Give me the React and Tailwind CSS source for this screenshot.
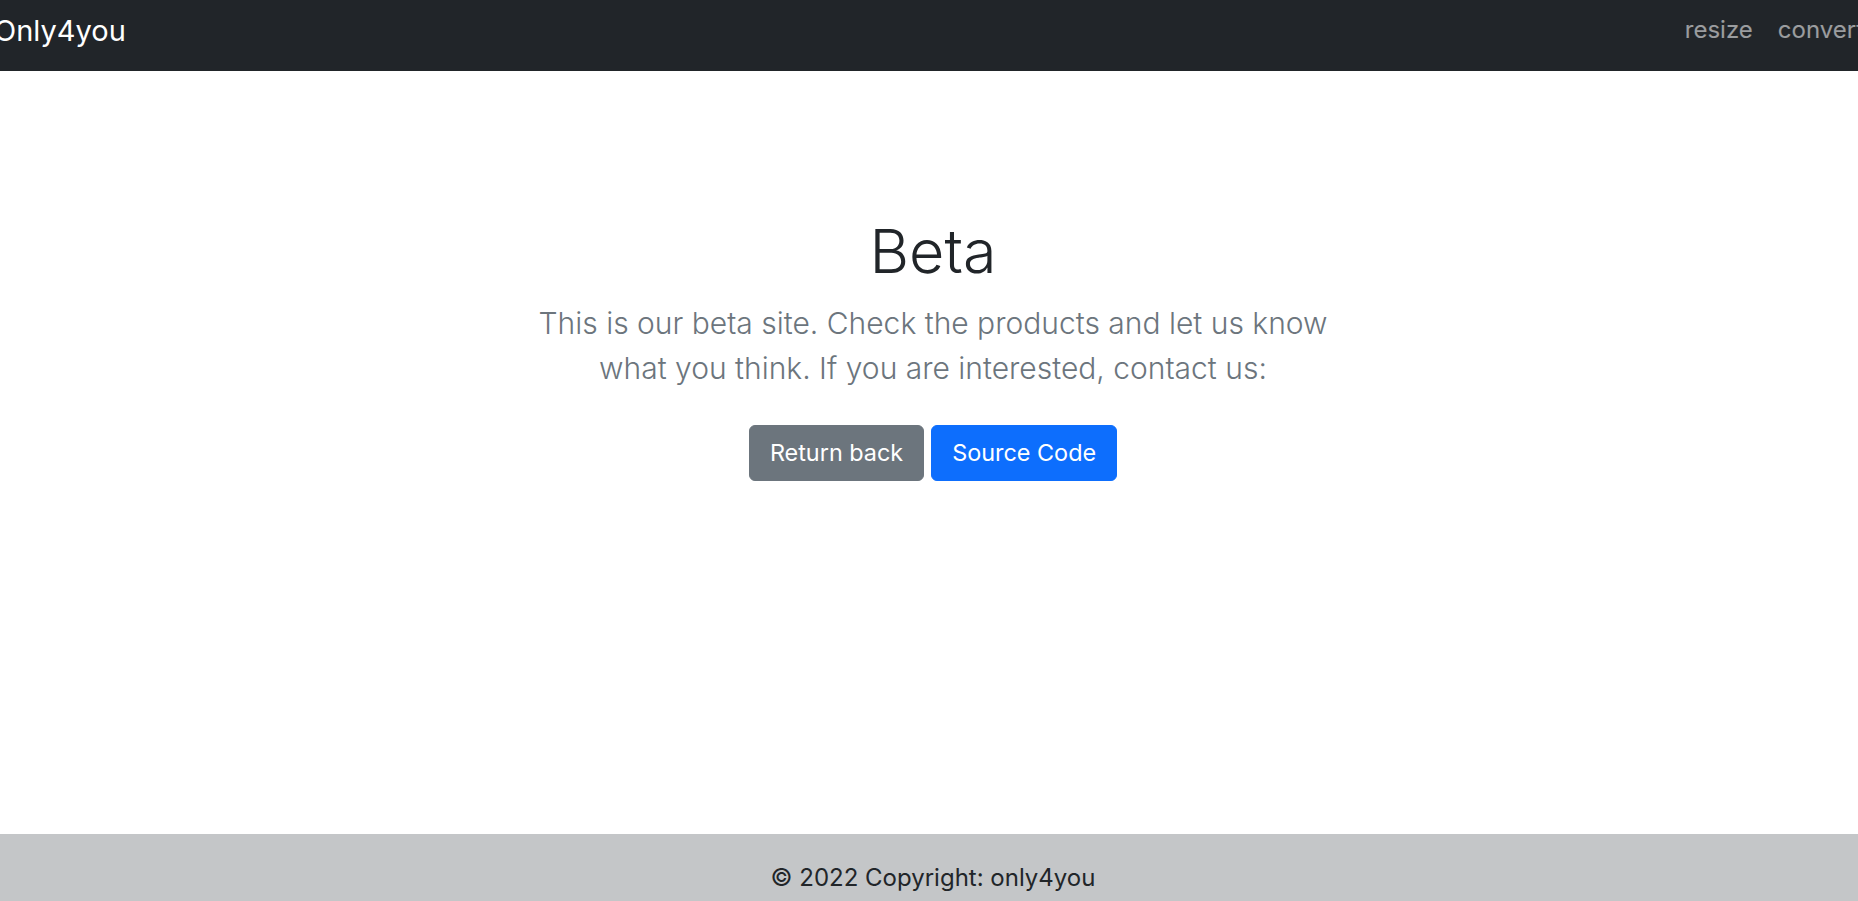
import React from 'react';

export default function App() {
    return (
        <div className="h-[901px] overflow-hidden flex flex-col bg-white font-['Inter','Noto_Sans',sans-serif] text-[#212529]">
            <nav className="h-[71px] shrink-0 bg-[#212529] flex items-start pt-[16px] overflow-hidden">
                <a className="ml-[-6px] text-[29px] leading-none text-white">Only4you</a>
                <div className="ml-auto mr-[-6px] mt-[2px] flex gap-[25px] text-[24px] leading-none text-white/55">
                    <a>resize</a>
                    <a>convert</a>
                </div>
            </nav>

            <main className="flex-1 pt-[144px] pl-[8px] text-center">
                <h1 className="text-[61px] leading-[1.2] font-light">Beta</h1>
                <p className="mt-[13px] mx-auto w-[820px] text-[30px] leading-[1.5] font-light text-[#6c757d]">
                    This is our beta site. Check the products and let us know what you think. If you are interested, contact us:
                </p>
                <div className="mt-[34px] flex justify-center gap-[7px]">
                    <button className="px-[20px] py-[9px] text-[23.4px] leading-[36px] text-white bg-[#6c757d] border border-[#6c757d] rounded-md">
                        Return back
                    </button>
                    <button className="px-[20px] py-[9px] text-[23.4px] leading-[36px] text-white bg-[#0d6efd] border border-[#0d6efd] rounded-md">
                        Source Code
                    </button>
                </div>
            </main>

            <footer className="h-[67px] shrink-0 bg-[#c4c6c8] pt-[26px] pl-[8px] text-center text-[24px] leading-[1.5]">
                © 2022 Copyright: only4you
            </footer>
        </div>
    );
}
